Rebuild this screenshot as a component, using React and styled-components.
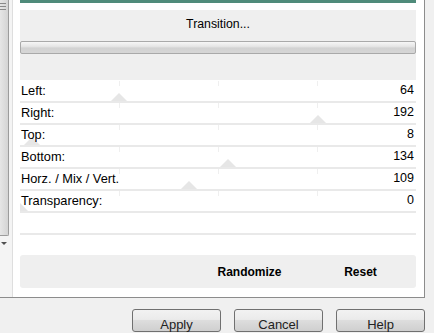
import React from 'react';
import styled, { createGlobalStyle } from 'styled-components';

const GlobalStyle = createGlobalStyle`
  html, body {
    margin: 0;
    padding: 0;
    background: #f0f0f0;
  }
  body {
    font-family: "Liberation Sans", Arial, sans-serif;
  }
`;

const sliders = [
  { label: 'Left:', value: 64 },
  { label: 'Right:', value: 192 },
  { label: 'Top:', value: 8 },
  { label: 'Bottom:', value: 134 },
  { label: 'Horz. / Mix / Vert.', value: 109 },
  { label: 'Transparency:', value: 0 },
];

const TRACK = 396;

const App = () => {
  return (
    <Window>
      <GlobalStyle />
      <TopSection>
        <ScrollColumn>
          <ScrollThumb>
            <Grip />
          </ScrollThumb>
          <ScrollArrow />
        </ScrollColumn>
        <Panel>
          <AccentBar />
          <Header>
            <HeaderTitle>Transition...</HeaderTitle>
            <ProgressTrack />
          </Header>
          <RowList>
            {sliders.map((s) => (
              <Row key={s.label}>
                {[0.25, 0.5, 0.75].map((q) => (
                  <Tick key={q} style={{ left: Math.round(q * TRACK) }} />
                ))}
                <Marker style={{ left: Math.round((s.value / 255) * TRACK) - 8 }} />
                <Label>{s.label}</Label>
                <Value>{s.value}</Value>
              </Row>
            ))}
            <Row />
          </RowList>
          <ActionBar>
            <TextButton>Randomize</TextButton>
            <TextButton>Reset</TextButton>
          </ActionBar>
        </Panel>
      </TopSection>
      <Footer>
        <DialogButton>Apply</DialogButton>
        <DialogButton>Cancel</DialogButton>
        <DialogButton>Help</DialogButton>
      </Footer>
    </Window>
  );
};

const Window = styled.div`
  width: 434px;
  height: 333px;
  overflow: hidden;
  background: #f0f0f0;
`;

const TopSection = styled.div`
  display: flex;
  width: 425px;
  height: 298px;
  box-sizing: border-box;
  border-right: 1px solid #8c8c8c;
  border-bottom: 1px solid #8c8c8c;
`;

const ScrollColumn = styled.div`
  width: 12px;
  flex: none;
  background: #f4f4f4;
  display: flex;
  flex-direction: column;
`;

const ScrollThumb = styled.div`
  width: 9px;
  height: 236px;
  box-sizing: border-box;
  background: linear-gradient(90deg, #e6e6e6, #d4d4d4);
  border-right: 1px solid #9c9c9c;
  border-bottom: 1px solid #9c9c9c;
  border-bottom-right-radius: 2px;
  padding-top: 3px;
`;

const Grip = styled.div`
  width: 6px;
  height: 7px;
  background: repeating-linear-gradient(
    180deg,
    #8a8a8a 0,
    #8a8a8a 1px,
    transparent 1px,
    transparent 3px
  );
`;

const ScrollArrow = styled.div`
  width: 0;
  height: 0;
  margin: 6px 0 0 1px;
  border-left: 3px solid transparent;
  border-right: 3px solid transparent;
  border-top: 3px solid #505050;
`;

const Panel = styled.div`
  flex: 1;
  background: #ffffff;
  border-left: 1px solid #dedede;
  padding: 0 8px 0 7px;
  display: flex;
  flex-direction: column;
`;

const AccentBar = styled.div`
  height: 3px;
  background: #4f8b7a;
  margin-bottom: 7px;
`;

const Header = styled.div`
  height: 70px;
  box-sizing: border-box;
  background: #efefef;
  padding-top: 7px;
  display: flex;
  flex-direction: column;
  align-items: center;
  gap: 9px;
  margin-bottom: 1px;
`;

const HeaderTitle = styled.div`
  font-size: 12.3px;
  line-height: 15px;
  color: #000;
`;

const ProgressTrack = styled.div`
  align-self: stretch;
  height: 13px;
  box-sizing: border-box;
  border: 1px solid #a9a9a9;
  border-radius: 2px;
  background: linear-gradient(180deg, #f6f6f6 0%, #e6e6e6 40%, #d2d2d2 55%, #d6d6d6 100%);
`;

const RowList = styled.div`
  display: flex;
  flex-direction: column;
`;

const Row = styled.div`
  position: relative;
  overflow: hidden;
  height: 22px;
  box-sizing: border-box;
  padding: 0 2px 1px 1px;
  border-bottom: 2px solid #e9e9e9;
  display: flex;
  align-items: center;
  justify-content: space-between;
`;

const Tick = styled.div`
  position: absolute;
  top: 0;
  width: 1px;
  height: 5px;
  background: #efefef;
`;

const Marker = styled.div`
  position: absolute;
  bottom: 0;
  width: 0;
  height: 0;
  border-left: 8px solid transparent;
  border-right: 8px solid transparent;
  border-bottom: 8px solid #e6e6e6;
`;

const Label = styled.span`
  position: relative;
  font-size: 12.8px;
  line-height: 15px;
  color: #000;
`;

const Value = styled.span`
  position: relative;
  font-size: 12.5px;
  line-height: 15px;
  color: #000;
`;

const ActionBar = styled.div`
  margin-top: 20px;
  height: 33px;
  background: #efefef;
  border-radius: 3px;
  display: flex;
  justify-content: flex-end;
  align-items: center;
`;

const TextButton = styled.button`
  width: 111px;
  height: 33px;
  border: none;
  background: transparent;
  font-family: "Liberation Sans", Arial, sans-serif;
  font-size: 12px;
  font-weight: 700;
  color: #000;
  padding: 1px 0 0;
`;

const Footer = styled.div`
  display: flex;
  justify-content: flex-end;
  gap: 13px;
  width: 425px;
  padding-top: 11px;
`;

const DialogButton = styled.button`
  width: 89px;
  height: 23px;
  box-sizing: border-box;
  border: 1px solid #707070;
  border-radius: 3px;
  background: linear-gradient(180deg, #f2f2f2 0%, #ebebeb 45%, #dddddd 50%, #cfcfcf 100%);
  font-family: "Liberation Sans", Arial, sans-serif;
  font-size: 13px;
  line-height: 15px;
  color: #222;
  padding: 7px 0 0;
  display: flex;
  justify-content: center;
  align-items: flex-start;
`;

export default App;
